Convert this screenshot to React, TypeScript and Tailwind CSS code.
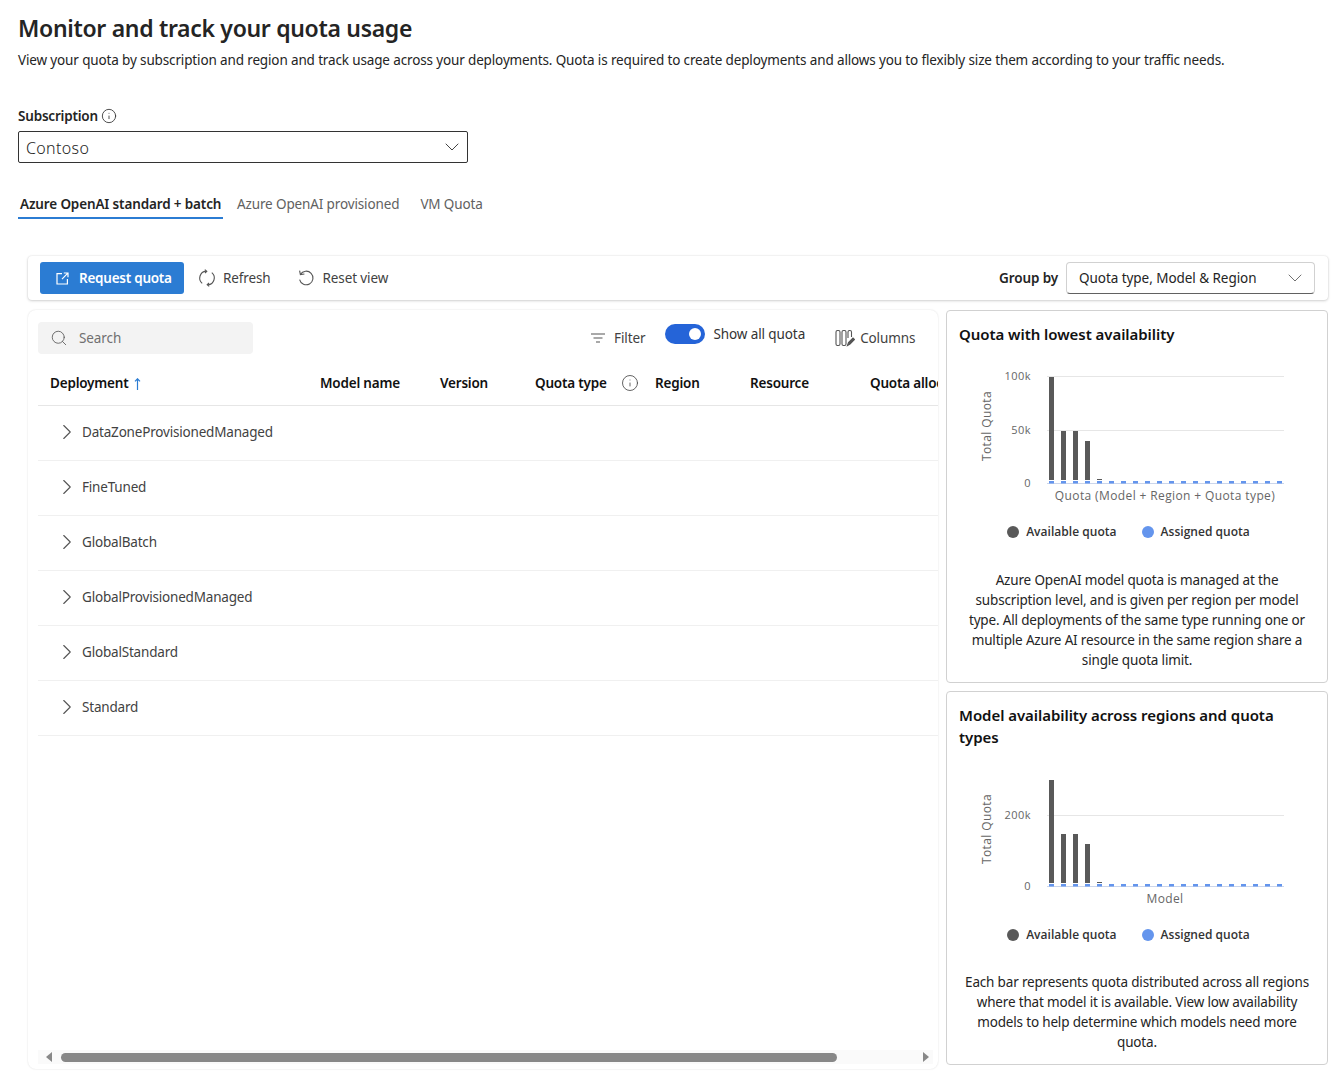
import React from "react";
import { ChevronDown, ChevronRight, Search, Info } from "lucide-react";

const F = "[font-family:'Noto_Sans','Open_Sans',sans-serif]";

function RefreshIcon() {
  return (
    <svg width="18" height="18" viewBox="0 0 18 18" fill="none" stroke="#555" strokeWidth="1.1">
      <path d="M4.2 14.4A7 7 0 0 1 8 2.1" />
      <path d="M6.8 0.6 8.8 2.2 7 4" />
      <path d="M13.8 3.6A7 7 0 0 1 10 15.9" />
      <path d="M11.2 17.4 9.2 15.8 11 14" />
    </svg>
  );
}
function ResetIcon() {
  return (
    <svg width="18" height="18" viewBox="0 0 18 18" fill="none" stroke="#555" strokeWidth="1.1">
      <path d="M3.4 5.4A6.8 6.8 0 1 1 2.6 10.6" />
      <path d="M2.6 1.6 3.4 5.6 7.4 5" />
    </svg>
  );
}
function OpenIcon() {
  return (
    <svg width="13" height="13" viewBox="0 0 13 13" fill="none" stroke="#fff" strokeWidth="1.2">
      <path d="M6 1.6H1v10.4h10.4V7" />
      <path d="M6 7.2 11.6 1.4M7.8 1h4.2v4.2" />
    </svg>
  );
}
function FilterIcon() {
  return (
    <svg width="16" height="12" viewBox="0 0 16 12" fill="none" stroke="#555" strokeWidth="1.2">
      <path d="M1 2h14M3.5 6h9M6 10h4" />
    </svg>
  );
}
function ColumnsIcon() {
  return (
    <svg width="20" height="18" viewBox="0 0 20 18" fill="none" stroke="#555" strokeWidth="1.1">
      <rect x="1" y="1.5" width="4" height="15" rx="1.5" />
      <rect x="7" y="1.5" width="4" height="15" rx="1.5" />
      <path d="M13 9V3a1.5 1.5 0 0 1 1.5-1.5h.5A1.5 1.5 0 0 1 16.5 3v5" />
      <path d="M12.5 16.5l1-3 4.5-4.5 1.5 1.5-4.5 4.5z" fill="#555" />
    </svg>
  );
}
function SortArrow() {
  return (
    <svg width="7" height="12" viewBox="0 0 7 12" fill="none" stroke="#2b7cd3" strokeWidth="1.2">
      <path d="M3.5 12V1M1 3.4 3.5 0.8 6 3.4" />
    </svg>
  );
}

const AXIS = { fontSize: 11, fill: "#666", fontFamily: "'Open Sans',sans-serif", letterSpacing: 0.45 };
const TITLE = { fontSize: 12, fill: "#666", fontFamily: "'Open Sans',sans-serif", letterSpacing: 0.38 };

function Chart({ grid, xLabel }: { grid: { y: number; label: string }[]; xLabel: string }) {
  const tall = [103, 49, 49, 39];
  return (
    <svg width="380" height="161" viewBox="0 0 380 161" className="block">
      {grid.map((g) => (
        <g key={g.label}>
          <line x1="100" x2="337" y1={g.y + 0.5} y2={g.y + 0.5} stroke="#e6e6e6" />
          <text x="84" y={g.y + 4} textAnchor="end" {...AXIS}>{g.label}</text>
        </g>
      ))}
      <line x1="100" x2="337" y1="122.5" y2="122.5" stroke="#ccd6eb" />
      <text x="84" y="126" textAnchor="end" {...AXIS}>0</text>
      <text transform="translate(44 65) rotate(-90)" textAnchor="middle" {...TITLE}>Total Quota</text>
      {tall.map((h, i) => (
        <rect key={i} x={102 + i * 12} y={119 - h} width="5" height={h} fill="#595959" />
      ))}
      <rect x="150" y="118" width="5" height="1" fill="#595959" />
      {Array.from({ length: 20 }).map((_, i) => (
        <rect key={i} x={102 + i * 12} y="120" width="5" height="2.5" fill="#6495ed" />
      ))}
      <text x="218" y="138.5" textAnchor="middle" {...TITLE}>{xLabel}</text>
    </svg>
  );
}

function Legend() {
  return (
    <div className="flex items-center justify-center gap-[25px] pr-[17px] text-[12px] font-semibold text-[#333] h-[20px] tracking-[0.03px] [font-family:'Open_Sans',sans-serif]">
      <span className="flex items-center gap-[7px]"><span className="w-[12px] h-[12px] rounded-full bg-[#595959]" />Available quota</span>
      <span className="flex items-center gap-[7px]"><span className="w-[12px] h-[12px] rounded-full bg-[#6495ed]" />Assigned quota</span>
    </div>
  );
}

const rows = ["DataZoneProvisionedManaged", "FineTuned", "GlobalBatch", "GlobalProvisionedManaged", "GlobalStandard", "Standard"];

export default function App() {
  return (
    <div className={`${F} w-[1337px] h-[1074px] overflow-hidden bg-white text-[#242424] pl-[18px] pr-[9px] pt-[12px]`}>
      <h1 className="text-[23px] leading-[32px] font-semibold tracking-[-0.32px]">Monitor and track your quota usage</h1>
      <p className="mt-[4px] text-[13.5px] leading-[24px] text-[#242424] tracking-[-0.14px] whitespace-nowrap">View your quota by subscription and region and track usage across your deployments. Quota is required to create deployments and allows you to flexibly size them according to your traffic needs.</p>

      <label className="mt-[34px] flex items-center gap-[3px] h-[20px] text-[13.5px] font-semibold tracking-[-0.2px]">Subscription <Info size={16} strokeWidth={1.3} className="text-[#333]" /></label>
      <div className="mt-[5px] flex items-center justify-between w-[450px] h-[32px] border border-[#333] rounded-[2px] pl-[7px] pr-[3px] text-[16px] font-light tracking-[0.35px]">
        <span className="translate-y-[1px]">Contoso</span>
        <ChevronDown size={24} strokeWidth={1} className="text-[#444]" />
      </div>

      <div className="mt-[29px] flex items-start text-[13.5px] text-[#616161] tracking-[-0.13px]">
        <div className="w-[205px] h-[27px] border-b-2 border-[#2b7cd3] pl-[2px] leading-[24px] font-semibold text-[#242424] whitespace-nowrap tracking-[-0.14px]">Azure OpenAI standard + batch</div>
        <div className="ml-[14px] leading-[24px]">Azure OpenAI provisioned</div>
        <div className="ml-[21px] leading-[24px]">VM Quota</div>
      </div>

      <div className="ml-[10px] mt-[37px] h-[44px] rounded-[4px] bg-white shadow-[0_0_2px_rgba(0,0,0,0.12),0_1px_3px_rgba(0,0,0,0.16)] flex items-center pl-[12px] pr-[13px] text-[13.5px] tracking-[-0.12px]">
        <button className="flex items-center w-[144px] h-[32px] bg-[#2b7cd3] text-white font-semibold rounded-[3px] pl-[16px] gap-[10px] tracking-[-0.25px]"><OpenIcon />Request quota</button>
        <span className="ml-[14px] flex items-center gap-[7px] text-[#424242]"><RefreshIcon />Refresh</span>
        <span className="ml-[26px] flex items-center gap-[8px] text-[#424242]"><ResetIcon />Reset view</span>
        <span className="ml-auto font-semibold text-[#242424]">Group by</span>
        <div className="ml-[8px] w-[249px] h-[32px] flex items-center justify-between border border-[#d1d1d1] border-b-[#616161] rounded-[4px] pl-[12px] pr-[7px] tracking-[-0.05px]">
          <span>Quota type, Model &amp; Region</span>
          <ChevronDown size={24} strokeWidth={0.9} className="text-[#616161]" />
        </div>
      </div>

      <div className="ml-[10px] mt-[10px] flex gap-[8px] items-start">
        <section className="relative w-[910px] h-[759px] overflow-hidden rounded-[8px] bg-white shadow-[0_0_2px_rgba(0,0,0,0.14)] pl-[10px]">
          <div className="flex items-center h-[52px] pt-[4px] text-[13.5px] tracking-[-0.1px]">
            <div className="w-[215px] h-[32px] shrink-0 bg-[#f3f3f3] rounded-[4px] flex items-center pl-[12px] gap-[11px] text-[#707070]">
              <Search size={18} strokeWidth={1.1} className="text-[#555]" />Search
            </div>
            <span className="ml-[337px] flex items-center gap-[8px] text-[#424242]"><FilterIcon />Filter</span>
            <span className="ml-[20px] w-[40px] h-[20px] shrink-0 rounded-full bg-[#2564d8] flex items-center justify-end pr-[4px] -mt-[8px]"><span className="w-[12px] h-[12px] rounded-full bg-white" /></span>
            <span className="ml-[8px] -mt-[8px] text-[#333]">Show all quota</span>
            <span className="ml-[30px] flex items-center gap-[5px] text-[#424242]"><ColumnsIcon />Columns</span>
          </div>

          <div className="flex items-center h-[44px] border-b border-[#e6e6e6] text-[13.5px] font-semibold text-[#111] whitespace-nowrap tracking-[-0.2px]">
            <span className="w-[282px] shrink-0 pl-[12px] flex items-center gap-[6px]">Deployment <SortArrow /></span>
            <span className="w-[120px] shrink-0">Model name</span>
            <span className="w-[95px] shrink-0">Version</span>
            <span className="w-[120px] shrink-0 flex items-center justify-between pr-[16px]">Quota type <Info size={18} strokeWidth={1.1} className="text-[#444] -translate-y-[1px]" /></span>
            <span className="w-[95px] shrink-0">Region</span>
            <span className="w-[120px] shrink-0">Resource</span>
            <span className="shrink-0">Quota allocation</span>
          </div>

          {rows.map((r) => (
            <div key={r} className="flex items-center h-[55px] pb-[2px] border-b border-[#f0f0f0] pl-[16px] gap-[2px] text-[13.5px] text-[#424242] tracking-[-0.19px]">
              <ChevronRight size={26} strokeWidth={1} className="text-[#555]" />
              {r}
            </div>
          ))}

          <div className="absolute left-[10px] right-[5px] bottom-[5px] h-[14px] bg-[#fafafa] flex items-center pl-[8px]">
            <span className="w-0 h-0 border-y-[5px] border-y-transparent border-r-[6px] border-r-[#888]" />
            <span className="ml-[9px] w-[776px] h-[9px] rounded-full bg-[#888]" />
            <span className="ml-auto mr-[4px] w-0 h-0 border-y-[5px] border-y-transparent border-l-[6px] border-l-[#888]" />
          </div>
        </section>

        <aside className="w-[382px] flex flex-col gap-[8px]">
          <div className="h-[373px] border border-[#d1d1d1] rounded-[4px] px-[12px] pt-[12px]">
            <h2 className="text-[15px] leading-[22px] font-semibold text-[#111] tracking-[-0.05px]">Quota with lowest availability</h2>
            <div className="mt-[16px] -ml-[12px]">
              <Chart grid={[{ y: 15, label: "100k" }, { y: 69, label: "50k" }]} xLabel="Quota (Model + Region + Quota type)" />
            </div>
            <Legend />
            <p className="mt-[28px] text-[13.5px] leading-[20px] text-center text-[#242424] tracking-[-0.17px]">Azure OpenAI model quota is managed at the subscription level, and is given per region per model type. All deployments of the same type running one or multiple Azure AI resource in the same region share a single quota limit.</p>
          </div>
          <div className="h-[374px] border border-[#d1d1d1] rounded-[4px] px-[12px] pt-[12px]">
            <h2 className="text-[15px] leading-[22px] font-semibold text-[#111] tracking-[-0.05px]">Model availability across regions and quota types</h2>
            <div className="mt-[16px] -ml-[12px]">
              <Chart grid={[{ y: 51, label: "200k" }]} xLabel="Model" />
            </div>
            <Legend />
            <p className="mt-[27px] text-[13.5px] leading-[20px] text-center text-[#242424] tracking-[-0.17px]">Each bar represents quota distributed across all regions where that model it is available. View low availability models to help determine which models need more quota.</p>
          </div>
        </aside>
      </div>
    </div>
  );
}
